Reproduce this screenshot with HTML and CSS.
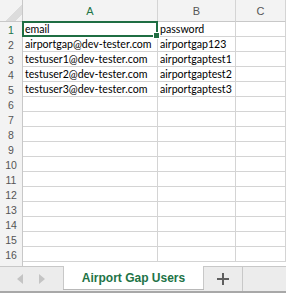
FILE: index.html
```html
<!DOCTYPE html>
<html lang="en">
<head>
  <meta charset="UTF-8" />
  <title>Airport Gap Users</title>
  <link rel="stylesheet" href="styles.css">
</head>
<body>
  <div class="sheet">
    <div class="grid">
      <div class="corner"></div>
      <div class="col-head selected">A</div>
      <div class="col-head">B</div>
      <div class="col-head">C</div>

      <div class="row-head selected">1</div>
      <div class="cell active">email<span class="handle"></span></div>
      <div class="cell">password</div>
      <div class="cell"></div>

      <div class="row-head">2</div>
      <div class="cell">airportgap@dev-tester.com</div>
      <div class="cell">airportgap123</div>
      <div class="cell"></div>

      <div class="row-head">3</div>
      <div class="cell">testuser1@dev-tester.com</div>
      <div class="cell">airportgaptest1</div>
      <div class="cell"></div>

      <div class="row-head">4</div>
      <div class="cell">testuser2@dev-tester.com</div>
      <div class="cell">airportgaptest2</div>
      <div class="cell"></div>

      <div class="row-head">5</div>
      <div class="cell">testuser3@dev-tester.com</div>
      <div class="cell">airportgaptest3</div>
      <div class="cell"></div>
    </div>
    <div class="grid" id="empty-rows"></div>
    <div class="filler"><div class="filler-head"></div></div>
  </div>

  <div class="tab-bar">
    <div class="nav">
      <svg width="10" height="12" viewBox="0 0 10 12"><path d="M8 1 L2 6 L8 11 Z" fill="#c4c4c4"/></svg>
      <svg width="10" height="12" viewBox="0 0 10 12"><path d="M2 1 L8 6 L2 11 Z" fill="#c4c4c4"/></svg>
    </div>
    <div class="tab">Airport Gap Users</div>
    <div class="add">
      <svg width="14" height="14" viewBox="0 0 14 14"><path d="M7 1 V13 M1 7 H13" stroke="#5f5f5f" stroke-width="2"/></svg>
    </div>
  </div>

  <script>
    const empty = document.getElementById('empty-rows');
    for (let n = 6; n <= 16; n++) {
      const head = document.createElement('div');
      head.className = 'row-head';
      head.textContent = n;
      empty.appendChild(head);
      for (let c = 0; c < 3; c++) {
        const cell = document.createElement('div');
        cell.className = 'cell';
        empty.appendChild(cell);
      }
    }
  </script>
</body>
</html>
```

FILE: styles.css
```css
body {
  margin: 0;
  width: 286px;
  height: 293px;
  overflow: hidden;
  background: #fff;
  font-family: 'Liberation Sans', Arial, sans-serif;
  display: flex;
  flex-direction: column;
}
.sheet {
  flex: 1;
  display: flex;
  flex-direction: column;
}
.grid {
  display: grid;
  grid-template-columns: 23px 135px 78px 1fr;
  grid-auto-rows: 15px;
}
.grid:first-child {
  grid-template-rows: 22px;
}
.corner,
.col-head,
.row-head,
.cell {
  box-sizing: border-box;
  border-right: 1px solid #d4d4d4;
  border-bottom: 1px solid #d4d4d4;
}
.corner {
  background: #f3f3f3 linear-gradient(135deg, transparent 62%, #dcdcdc 62%, #dcdcdc 84%, transparent 84%);
  border-color: #c8c8c8;
}
.col-head {
  background: #f3f3f3;
  border-bottom-color: #c8c8c8;
  color: #555;
  font-size: 11px;
  display: flex;
  align-items: center;
  justify-content: center;
}
.col-head.selected {
  color: #217346;
}
.row-head {
  background: #f3f3f3;
  border-bottom: none;
  border-right-color: #c8c8c8;
  color: #555;
  font-size: 10.5px;
  display: flex;
  align-items: center;
  justify-content: center;
}
.row-head.selected {
  color: #217346;
}
.cell {
  font-family: Lato, 'Liberation Sans', sans-serif;
  font-size: 10.6px;
  color: #000;
  padding-left: 2px;
  line-height: 15px;
  white-space: nowrap;
  overflow: visible;
}
.cell.active {
  position: relative;
  border: 2px solid #1f6e43;
  padding-left: 1px;
  line-height: 13px;
  margin: -1px 0 0 -1px;
  width: calc(100% + 1px);
  height: 16px;
}
.handle {
  position: absolute;
  right: -4px;
  bottom: -4px;
  width: 5px;
  height: 5px;
  background: #1f6e43;
  border: 1px solid #fff;
}
.filler {
  flex: 1;
  display: flex;
}
.filler-head {
  width: 23px;
  box-sizing: border-box;
  background: #f3f3f3;
  border-right: 1px solid #c8c8c8;
}
.tab-bar {
  height: 27px;
  box-sizing: border-box;
  background: #ececec;
  border-top: 1px solid #c8c8c8;
  border-bottom: 2px solid #a8a8a8;
  display: flex;
}
.nav {
  width: 61px;
  display: flex;
  align-items: center;
  justify-content: center;
  gap: 12px;
  padding-right: 2px;
}
.tab {
  width: 141px;
  box-sizing: border-box;
  margin-top: -1px;
  margin-bottom: 2px;
  background: #fff;
  border-left: 1px solid #c8c8c8;
  border-right: 1px solid #c8c8c8;
  box-shadow: 0 1px 0 #b8b8b8;
  color: #217346;
  font-weight: bold;
  font-size: 12px;
  display: flex;
  align-items: center;
  justify-content: center;
}
.add {
  width: 38px;
  border-right: 1px solid #c8c8c8;
  display: flex;
  align-items: center;
  justify-content: center;
}
```
